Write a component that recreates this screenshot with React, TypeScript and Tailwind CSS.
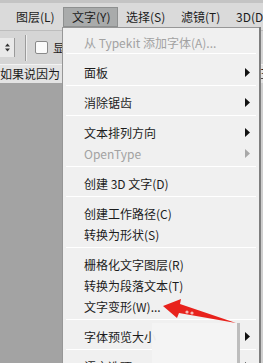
type Row =
  | { kind: "item"; label: string; disabled?: boolean; sub?: boolean }
  | { kind: "sep"; first?: boolean };

const rows: Row[] = [
  { kind: "item", label: "从 Typekit 添加字体(A)...", disabled: true },
  { kind: "sep", first: true },
  { kind: "item", label: "面板", sub: true },
  { kind: "sep" },
  { kind: "item", label: "消除锯齿", sub: true },
  { kind: "sep" },
  { kind: "item", label: "文本排列方向", sub: true },
  { kind: "item", label: "OpenType", disabled: true, sub: true },
  { kind: "sep" },
  { kind: "item", label: "创建 3D 文字(D)" },
  { kind: "sep" },
  { kind: "item", label: "创建工作路径(C)" },
  { kind: "item", label: "转换为形状(S)" },
  { kind: "sep" },
  { kind: "item", label: "栅格化文字图层(R)" },
  { kind: "item", label: "转换为段落文本(T)" },
  { kind: "item", label: "文字变形(W)..." },
  { kind: "sep" },
  { kind: "item", label: "字体预览大小", sub: true },
  { kind: "sep" },
  { kind: "item", label: "语言选项", sub: true },
];

const menus = ["图层(L)", "文字(Y)", "选择(S)", "滤镜(T)", "3D(D)"];

function SubArrow({ disabled }: { disabled?: boolean }) {
  return (
    <svg width="5" height="9" viewBox="0 0 5 9" className="mr-[9px]">
      <path d="M0 0 L5 4.5 L0 9 Z" fill={disabled ? "#a8a8a8" : "#111"} />
    </svg>
  );
}

export default function App() {
  return (
    <div className="relative w-[263px] h-[363px] overflow-hidden bg-[#a3a3a3] text-[12px] leading-none text-[#1c1c1c] font-['Noto_Sans_CJK_SC','Microsoft_YaHei',sans-serif] flex flex-col">
      {/* menu bar */}
      <div className="h-[30px] shrink-0 bg-[#dadada] border-t-[3px] border-[#c4c4c4] flex pl-[8px] pt-[4px]">
        {menus.map((m, i) => (
          <div
            key={m}
            className={
              i === 1
                ? "w-[55px] h-[20px] shrink-0 flex items-center pl-[8px] bg-[#a9abab] border border-[#8e9090]"
                : "w-[55px] h-[20px] shrink-0 flex items-center pl-[8px]"
            }
          >
            {m}
          </div>
        ))}
      </div>

      {/* options bar */}
      <div className="h-[34px] shrink-0 bg-[#d5d5d5] border-t border-[#bdbdbd] flex items-center">
        <div className="w-[15px] h-[19px] bg-[#e9e9e9] border-r border-[#9a9a9a] flex items-center justify-end pr-[4px]">
          <svg width="5" height="9" viewBox="0 0 5 9">
            <path d="M0 3.5 L2.5 0.5 L5 3.5 Z M0 5.5 L2.5 8.5 L5 5.5 Z" fill="#333" />
          </svg>
        </div>
        <div className="ml-[10px] w-[2px] h-[26px] border-l border-[#9c9c9c] border-r border-r-[#efefef]" />
        <div className="ml-[8px] w-[13px] h-[13px] bg-[#fbfbfb] border border-[#8a8a8a] rounded-[2px]" />
        <span className="ml-[5px]">显</span>
      </div>

      {/* text row */}
      <div className="h-[19px] shrink-0 bg-[#e3e3e3] border-t border-[#f2f2f2] flex items-center justify-between">
        <span>如果说因为</span>
        <span className="-mr-[9px]">王</span>
      </div>

      {/* canvas */}
      <div className="flex-1 flex">
        <div className="flex-1 bg-[#a3a3a3]" />
        <div className="w-[2px] bg-[#cfcfcf]" />
      </div>

      {/* dropdown menu */}
      <div className="absolute left-[62px] top-[27px] w-[197px] h-[345px] bg-[#f0f0f0] border-l border-t border-[#979797] shadow-[2px_0_0_#7e7e7e] pt-[4px]">
        {rows.map((r, i) =>
          r.kind === "sep" ? (
            <div key={i} className={r.first ? "h-[9px] pt-[0px]" : "h-[9px] pt-[2px]"}>
              <div className="mx-[3px] h-px bg-[#a8a8a8] border-b border-[#ffffff]" />
            </div>
          ) : (
            <div
              key={i}
              className={
                r.disabled
                  ? "h-[21px] flex items-center justify-between pl-[21px] text-[#a2a2a2]"
                  : "h-[21px] flex items-center justify-between pl-[21px]"
              }
            >
              <span>{r.label}</span>
              {r.sub ? <SubArrow disabled={r.disabled} /> : null}
            </div>
          )
        )}
      </div>

      {/* ghost popup over the lower menu */}
      <div className="absolute left-[152px] top-[323px] w-[88px] h-[50px] bg-[#f3f3f3]/95 border-r-[3px] border-[#bdbdbd]" />

      {/* red arrow annotation */}
      <svg className="absolute left-0 top-0 pointer-events-none" width="263" height="363" viewBox="0 0 263 363">
        <polygon
          points="163,306 181,299 180,304 236,323 179,313 177,318"
          fill="#e8221c"
        />
        <circle cx="187" cy="312" r="1.6" fill="#f6b9b6" />
        <circle cx="192" cy="313" r="1.6" fill="#f6b9b6" />
      </svg>
    </div>
  );
}
